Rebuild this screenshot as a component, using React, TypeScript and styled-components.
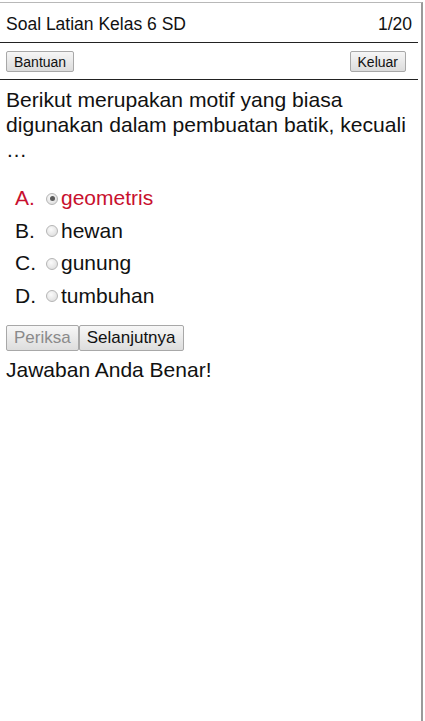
import React, { useState } from "react";
import styled, { createGlobalStyle } from "styled-components";

const GlobalStyle = createGlobalStyle`
  html, body {
    margin: 0;
    padding: 0;
    background: #fff;
    font-family: "Liberation Sans", Arial, sans-serif;
    color: #111;
  }
`;

const options = [
  { key: "A", text: "geometris" },
  { key: "B", text: "hewan" },
  { key: "C", text: "gunung" },
  { key: "D", text: "tumbuhan" },
];

const App = () => {
  const [selected, setSelected] = useState("A");

  return (
    <>
      <GlobalStyle />
      <Frame>
        <Header>
          <Title>Soal Latian Kelas 6 SD</Title>
          <Counter>1/20</Counter>
        </Header>
        <Toolbar>
          <SmallButton>Bantuan</SmallButton>
          <SmallButton>Keluar</SmallButton>
        </Toolbar>
        <Question>
          Berikut merupakan motif yang biasa digunakan dalam pembuatan batik,
          kecuali …
        </Question>
        <OptionList>
          {options.map((o) => (
            <Option
              key={o.key}
              correct={o.key === selected}
              onClick={() => setSelected(o.key)}
            >
              <Letter>{o.key}.</Letter>
              <Radio checked={o.key === selected} />
              <span>{o.text}</span>
            </Option>
          ))}
        </OptionList>
        <Actions>
          <ActionButton disabled>Periksa</ActionButton>
          <ActionButton>Selanjutnya</ActionButton>
        </Actions>
        <Result>Jawaban Anda Benar!</Result>
      </Frame>
    </>
  );
};
export default App;

const Frame = styled.div`
  margin-top: 2px;
  width: 421px;
  min-height: calc(100vh - 3px);
  border-top: 1px solid #b8b8b8;
  border-right: 2px solid #9a9a9a;
  box-sizing: content-box;
`;

const Header = styled.div`
  display: flex;
  justify-content: space-between;
  align-items: center;
  padding: 4px 6px 0 6px;
  margin-right: 3px;
  box-sizing: border-box;
  height: 40px;
  border-bottom: 1px solid #222;
`;

const Title = styled.span`
  font-size: 17.5px;
`;

const Counter = styled.span`
  font-size: 17.5px;
`;

const Toolbar = styled.div`
  display: flex;
  justify-content: space-between;
  align-items: center;
  height: 36px;
  padding: 0 12px 0 6px;
  margin-right: 3px;
  border-bottom: 1px solid #222;
`;

const SmallButton = styled.button`
  font-family: "Liberation Sans", Arial, sans-serif;
  font-size: 14px;
  color: #111;
  height: 21px;
  padding: 0 7px;
  margin-top: 1px;
  border: 1px solid #a8a8a8;
  border-radius: 2px;
  background: linear-gradient(#f6f6f6, #dcdcdc);
`;

const Question = styled.div`
  font-size: 21.1px;
  line-height: 25px;
  padding: 7px 0 0 6px;
`;

const OptionList = styled.div`
  display: flex;
  flex-direction: column;
  padding: 20px 0 0 15px;
`;

const Option = styled.label`
  display: flex;
  align-items: center;
  height: 32.5px;
  font-size: 21px;
  color: ${(p) => (p.correct ? "#c8102e" : "#111")};
  cursor: pointer;
`;

const Letter = styled.span`
  width: 31px;
`;

const Radio = styled.span`
  position: relative;
  width: 12px;
  height: 12px;
  margin-right: 3px;
  margin-top: 1px;
  border-radius: 50%;
  border: 1px solid #b5b5b5;
  box-sizing: border-box;
  background: radial-gradient(circle at 40% 35%, #fbfbfb, #d8d8d8);
  &::after {
    content: "";
    display: ${(p) => (p.checked ? "block" : "none")};
    position: absolute;
    left: 2.5px;
    top: 2.5px;
    width: 5px;
    height: 5px;
    border-radius: 50%;
    background: #5a5a5a;
  }
`;

const Actions = styled.div`
  display: flex;
  padding: 13px 0 0 6px;
`;

const ActionButton = styled.button`
  font-family: "Liberation Sans", Arial, sans-serif;
  font-size: 17px;
  height: 26px;
  padding: 0 7px;
  border: 1px solid #a8a8a8;
  border-radius: 2px;
  background: linear-gradient(#f7f7f7, #dddddd);
  color: #111;
  &:disabled {
    color: #8a8a8a;
  }
`;

const Result = styled.div`
  font-size: 21px;
  padding: 7px 6px 0;
`;
